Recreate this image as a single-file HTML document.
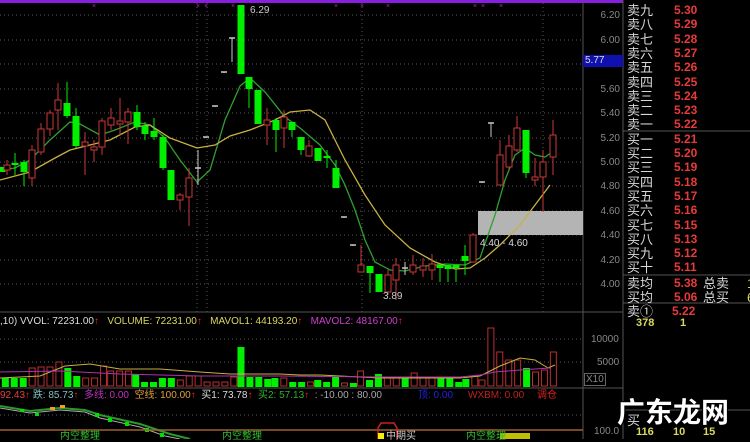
<!DOCTYPE html>
<html><head><meta charset="utf-8"><style>
html,body{margin:0;padding:0;background:#000;width:750px;height:439px;overflow:hidden;font-family:"Liberation Sans","Noto Sans CJK SC",sans-serif}
.t{position:absolute;white-space:nowrap;font-size:11px;line-height:11px}
.ob{position:absolute;left:627px;font-size:13px;line-height:13px;color:#d8d8d8;white-space:nowrap}
.ob b{position:absolute;left:47px;color:#e83a3a;font-weight:bold;font-size:12px}
</style></head><body>
<svg id="s" width="750" height="439" style="position:absolute;left:0;top:0">
<rect x="0" y="0" width="623" height="3" fill="#8a1ee0"/>
<g id="grid" stroke="#5a5a5a" stroke-dasharray="1,3"></g>
<line x1="583" y1="0" x2="583" y2="439" stroke="#555"/>
<line x1="623" y1="0" x2="623" y2="439" stroke="#555"/>
<line x1="0" y1="312" x2="623" y2="312" stroke="#555"/>
<line x1="0" y1="388" x2="623" y2="388" stroke="#555"/>
<line x1="623" y1="131" x2="750" y2="131" stroke="#555"/>
<line x1="623" y1="275" x2="750" y2="275" stroke="#555"/>
<line x1="623" y1="303" x2="750" y2="303" stroke="#555"/>
<line x1="623" y1="410" x2="750" y2="410" stroke="#555"/>
<rect x="478" y="211" width="105" height="24" fill="#b4b4b4"/>
<polyline fill="none" stroke="#2fa02f" stroke-width="1.3" points="0,170 15,168 30,160 50,140 70,122 80,124 100,135 115,130 135,122 150,125 165,138 180,160 197,182 210,170 225,120 240,86 250,78 265,92 285,117 300,128 320,145 335,165 345,185 355,210 365,240 375,262 390,270 405,271 425,266 445,264 465,265 480,258 495,215 505,180 515,155 525,148 535,155 545,157 555,150"/>
<polyline fill="none" stroke="#c8b040" stroke-width="1.3" points="0,180 30,172 55,158 70,150 90,145 110,140 135,127 150,125 170,138 197,148 215,145 230,136 250,130 275,120 290,112 310,110 325,120 345,160 365,195 385,225 410,248 435,262 455,269 470,268 485,258 500,245 520,225 535,205 550,185"/>
<g id="c"></g>
<g id="v"></g>
<polyline fill="none" stroke="#c8b040" points="0,378 40,376 65,366 90,364 120,369 160,369 200,372 230,374 260,374 280,374 300,375 320,375 340,376 380,378 420,378 460,378 480,376 500,366 520,358 535,360 548,368 555,365"/>
<polyline fill="none" stroke="#b030b0" points="0,372 60,371 120,374 200,376 280,376 380,377 460,377 480,375 495,372 520,370 550,368"/>
<polyline fill="none" stroke="#2a9a2a" stroke-width="2" points="0,406 30,411 60,408 85,410 100,415 140,424 170,434 190,439"/>
<polyline fill="none" stroke="#aaa" points="0,408 30,413 60,410 85,412 100,418 140,427 165,436 180,439"/>
<g fill="#00e000"><rect x="20" y="409" width="4" height="3"/><rect x="35" y="413" width="4" height="3"/><rect x="95" y="413" width="4" height="4"/><rect x="108" y="418" width="4" height="4"/><rect x="125" y="422" width="4" height="4"/><rect x="145" y="428" width="4" height="4"/><rect x="160" y="433" width="4" height="4"/></g>
<g fill="#f0a020"><rect x="50" y="407" width="5" height="3"/><rect x="60" y="405" width="5" height="3"/></g>
<line x1="0" y1="430" x2="583" y2="430" stroke="#a06030" stroke-width="1.5"/>
<path d="M378 439 V428 L381 423 H394 L397 428 V439" fill="none" stroke="#d02020" stroke-width="1.5"/>
<rect x="378" y="433" width="6" height="6" fill="#f0f000"/>
<rect x="500" y="433" width="30" height="6" fill="#c0c000"/>
<g fill="#c020c0" font-size="7" font-family="Liberation Sans"><text x="92" y="8">×</text><text x="196" y="8">×</text><text x="204" y="8">×</text><text x="231" y="8">×</text><text x="334" y="8">×</text><text x="360" y="8">×</text><text x="386" y="8">×</text><text x="473" y="8">×</text><text x="481" y="8">×</text><text x="499" y="8">×</text></g>
</svg>
<div class="t" style="left:250px;top:5px;color:#ccc;font-size:10px">6.29</div>
<div class="t" style="left:383px;top:291px;color:#ccc;font-size:10px">3.89</div>
<div class="t" style="left:480px;top:238px;color:#ddd;font-size:10px">4.40 - 4.60</div>
<div id="ax"></div>
<div class="t" style="left:583px;top:55px;width:40px;height:12px;background:#1010b0;color:#ddd;font-size:10px;line-height:12px;padding-left:2px;box-sizing:border-box">5.77</div>
<div class="t" style="left:591px;top:334px;color:#888;font-size:10px">10000</div>
<div class="t" style="left:597px;top:357px;color:#888;font-size:10px">5000</div>
<div class="t" style="left:584px;top:373px;color:#888;font-size:10px;border:1px solid #666;padding:0 1px">X10</div>
<div class="t" style="left:594px;top:426px;color:#888;font-size:10px">100.0</div>
<div class="t" style="left:0;top:316px;font-size:10px"><span style="color:#ddd">,10) VVOL: 72231.00</span><span style="color:#f22">↑</span> &nbsp; <span style="color:#d8d860">VOLUME: 72231.00</span><span style="color:#f22">↑</span> &nbsp; <span style="color:#d8d860">MAVOL1: 44193.20</span><span style="color:#f22">↑</span> &nbsp; <span style="color:#d040d0">MAVOL2: 48167.00</span><span style="color:#f22">↑</span></div>
<div class="t" style="left:0;top:390px;font-size:10px"><span style="color:#e04040">92.43</span><span style="color:#f22">↑</span> <span style="color:#80c0c0">跌: 85.73</span><span style="color:#f22">↑</span> &nbsp;<span style="color:#c030c0">多线: 0.00</span> &nbsp;<span style="color:#e0a040">空线: 100.00</span><span style="color:#f22">↑</span> &nbsp;<span style="color:#ddd">买1: 73.78</span><span style="color:#f22">↑</span> &nbsp;<span style="color:#30b030">买2: 57.13</span><span style="color:#f22">↑</span> &nbsp;<span style="color:#aaa">: -10.00 : 80.00</span></div>
<div class="t" style="left:418px;top:390px;font-size:10px;color:#2020e0">顶: 0.00</div>
<div class="t" style="left:468px;top:390px;font-size:10px;color:#c02020">WXBM: 0.00</div>
<div class="t" style="left:537px;top:390px;font-size:10px;color:#e02020">调仓</div>
<div class="t" style="left:60px;top:431px;font-size:10px;color:#30c030">内空整理</div>
<div class="t" style="left:222px;top:431px;font-size:10px;color:#30c030">内空整理</div>
<div class="t" style="left:466px;top:431px;font-size:10px;color:#30c030">内空整理</div>
<div class="t" style="left:386px;top:431px;font-size:10px;color:#ccc">中期买</div>
<div id="ob"></div>
<div class="ob" style="top:277px">卖均<b>5.38</b><span style="position:absolute;left:76px">总卖</span><span style="position:absolute;left:120px;color:#d8d860">1</span></div>
<div class="ob" style="top:291px">买均<b>5.06</b><span style="position:absolute;left:76px">总买</span><span style="position:absolute;left:120px;color:#d8d860">6</span></div>
<div class="ob" style="top:305px">卖①<b style="left:45px">5.22</b></div>
<div class="ob" style="top:317px;color:#d8d860;font-size:11px;font-weight:bold"><span style="position:absolute;left:9px">378</span><span style="position:absolute;left:53px">1</span></div>
<div class="ob" style="top:414px">买</div>
<div class="ob" style="top:426px;color:#d8d860;font-size:11px;font-weight:bold"><span style="position:absolute;left:9px">116</span><span style="position:absolute;left:46px">10</span><span style="position:absolute;left:76px">15</span></div>
<div style="position:absolute;left:617px;top:396px;font-size:28px;line-height:30px;color:#fff;font-weight:bold;font-family:'Noto Sans CJK SC',sans-serif;text-shadow:0 0 2px #000,1px 1px 0 #000,-1px -1px 0 #000">广东龙网</div>
<script>
var g=document.getElementById('grid'),ns='http://www.w3.org/2000/svg';
function el(t,a,p){var e=document.createElementNS(ns,t);for(var k in a)e.setAttribute(k,a[k]);p.appendChild(e);return e}
var ys=[15,40,64,89,113,138,162,186,211,235,260,284],lab=['6.20','6.00','5.80','5.60','5.40','5.20','5.00','4.80','4.60','4.40','4.20','4.00'],ax='';
ys.forEach(function(y,i){el('line',{x1:0,y1:y,x2:583,y2:y},g);ax+='<div class="t" style="left:588px;width:32px;text-align:right;top:'+(y-5)+'px;color:#888;font-size:10px">'+lab[i]+'</div>'});
[339,362,415].forEach(function(y){el('line',{x1:0,y1:y,x2:583,y2:y},g)});
[197,207,362,543].forEach(function(x){el('line',{x1:x,y1:3,x2:x,y2:312},g)});
document.getElementById('ax').innerHTML=ax;
var C=[[2,167,172,167,172,'g'],[7,165,170,160,175,'r'],[15,163,165,153,175,'g'],[24,162,172,160,186,'g'],[32,150,178,145,186,'r'],[41,129,152,123,155,'r'],[50,113,129,110,136,'r'],[58,100,110,83,130,'r'],[67,103,116,82,118,'g'],[76,116,146,108,148,'g'],[85,142,146,132,175,'r'],[94,147,150,140,162,'r'],[102,121,147,118,155,'r'],[111,118,125,108,130,'r'],[120,121,124,98,135,'r'],[128,112,122,108,144,'r'],[137,112,127,105,130,'g'],[145,126,134,122,140,'g'],[154,131,137,118,140,'g'],[163,137,168,135,170,'g'],[171,170,200,170,200,'g'],[180,195,200,193,210,'r'],[189,178,197,168,226,'r'],[198,168,169,150,185,'w'],[206,137,138,137,138,'w'],[215,106,107,106,107,'w'],[224,72,73,72,73,'w'],[232,38,39,38,62,'w'],[241,5,74,5,74,'g'],[249,77,89,77,108,'g'],[258,90,124,90,124,'g'],[267,120,125,108,145,'r'],[276,120,130,118,152,'g'],[284,117,128,110,148,'r'],[292,122,130,122,137,'g'],[301,137,150,137,155,'g'],[309,146,156,140,157,'r'],[318,148,161,148,161,'g'],[327,156,157,150,168,'g'],[336,168,188,160,188,'g'],[344,217,218,217,218,'w'],[353,245,246,245,246,'w'],[361,265,272,245,272,'r'],[370,266,273,266,293,'g'],[379,274,292,274,292,'g'],[388,275,292,270,295,'r'],[396,265,280,258,300,'r'],[405,268,269,262,275,'w'],[413,265,272,255,275,'r'],[423,266,270,258,277,'r'],[432,264,270,254,280,'r'],[440,265,268,265,282,'g'],[448,265,269,265,282,'g'],[456,265,268,265,282,'g'],[465,256,261,245,275,'g'],[473,235,262,233,262,'r'],[482,182,183,182,183,'w'],[491,123,124,123,137,'w'],[500,155,185,140,185,'r'],[509,146,167,135,170,'r'],[517,128,150,116,152,'r'],[526,130,173,130,178,'g'],[535,177,180,158,186,'r'],[543,162,177,150,212,'r'],[553,135,157,120,175,'r']];
var cg=document.getElementById('c');
C.forEach(function(c){var x=c[0],col=c[5]=='r'?'#c83838':c[5]=='g'?'#00f000':'#c8c8c8';
el('line',{x1:x,y1:c[3],x2:x,y2:c[4],stroke:col},cg);
if(c[5]=='w'){el('line',{x1:x-3,y1:c[1],x2:x+3,y2:c[1],stroke:col,'stroke-width':1.5},cg)}
else if(c[5]=='r'){el('rect',{x:x-3,y:c[1],width:6,height:Math.max(c[2]-c[1],2),fill:'#000',stroke:col},cg)}
else el('rect',{x:x-3.5,y:c[1],width:7,height:Math.max(c[2]-c[1],2),fill:col},cg)});
var V=[[15,378,'g'],[40,378,'g'],[65,378,'g'],[90,368,'r'],[115,367,'r'],[140,367,'r'],[165,362,'r'],[190,368,'g'],[215,376,'g'],[240,378,'r'],[265,378,'r'],[290,366,'r'],[310,371,'r'],[335,371,'r'],[360,371,'r'],[380,374,'g'],[405,382,'g'],[430,382,'g'],[455,378,'g'],[480,378,'g'],[505,380,'r'],[530,376,'r'],[555,376,'r'],[580,382,'r'],[605,382,'r'],[630,382,'r'],[655,377,'r'],[675,347,'g'],[700,377,'g'],[725,377,'g'],[750,379,'g'],[770,378,'g'],[795,378,'r'],[820,382,'g'],[845,382,'g'],[870,382,'r'],[890,380,'g'],[915,382,'g'],[940,377,'g'],[965,383,'r'],[990,383,'g'],[1010,371,'r'],[1035,380,'g'],[1060,374,'g'],[1085,378,'r'],[1110,378,'r'],[1135,378,'g'],[1160,373,'r'],[1185,378,'r'],[1210,378,'r'],[1235,378,'g'],[1260,378,'g'],[1285,382,'g'],[1305,379,'g'],[1330,376,'r'],[1350,380,'r'],[1375,328,'r'],[1400,352,'r'],[1425,360,'r'],[1450,360,'r'],[1475,368,'g'],[1500,372,'r'],[1525,370,'r'],[1550,352,'r']];
var vg=document.getElementById('v');
V.forEach(function(v){var x=v[0]*0.357;if(v[2]=='g')el('rect',{x:x-3.5,y:v[1],width:7,height:387-v[1],fill:'#00f000'},vg);else el('rect',{x:x-3,y:v[1],width:6,height:386-v[1],fill:'#000',stroke:'#b83030'},vg)});
var ob='',n=['卖九','卖八','卖七','卖六','卖五','卖四','卖三','卖二','卖一','买一','买二','买三','买四','买五','买六','买七','买八','买九','买十'],p=['5.30','5.29','5.28','5.27','5.26','5.25','5.24','5.23','5.22','5.21','5.20','5.19','5.18','5.17','5.16','5.15','5.13','5.12','5.11'];
n.forEach(function(s,i){ob+='<div class="ob" style="top:'+(4+i*14.3)+'px">'+s+'<b>'+p[i]+'</b></div>'});
document.getElementById('ob').innerHTML=ob;
</script>
</body></html>
